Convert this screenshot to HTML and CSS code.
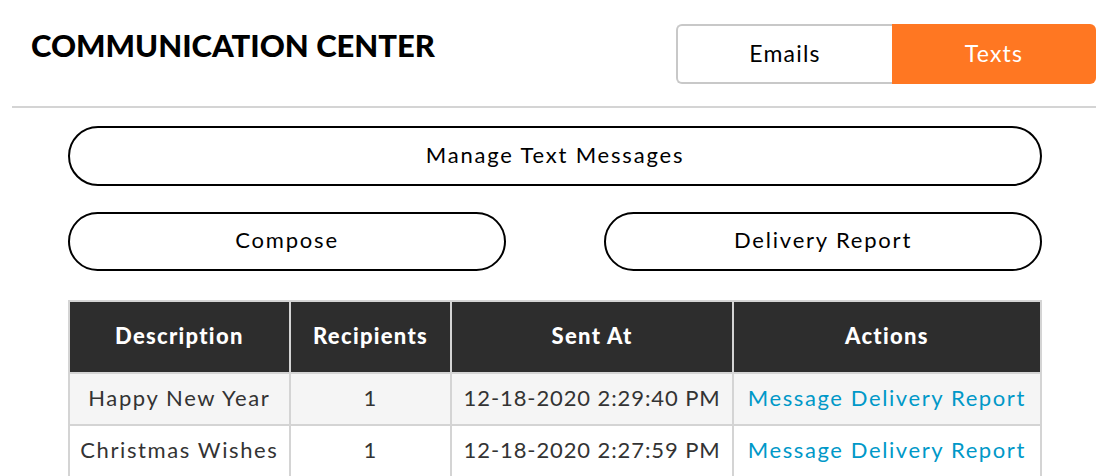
FILE: index.html
```html
<!DOCTYPE html>
<html>
<head>
<meta charset="utf-8">
<link rel="stylesheet" href="styles.css">
</head>
<body>
<div class="page">
  <header class="topbar">
    <h1 class="title">COMMUNICATION CENTER</h1>
    <div class="toggle">
      <button class="tab">Emails</button>
      <button class="tab active">Texts</button>
    </div>
  </header>
  <main class="content">
    <button class="pill full">Manage Text Messages</button>
    <div class="pill-row">
      <button class="pill">Compose</button>
      <button class="pill">Delivery Report</button>
    </div>
    <table class="grid">
      <thead>
        <tr>
          <th class="c1">Description</th>
          <th class="c2">Recipients</th>
          <th class="c3">Sent At</th>
          <th class="c4">Actions</th>
        </tr>
      </thead>
      <tbody>
        <tr class="odd">
          <td>Happy New Year</td>
          <td>1</td>
          <td class="date">12-18-2020 2:29:40 PM</td>
          <td><a href="#">Message Delivery Report</a></td>
        </tr>
        <tr>
          <td>Christmas Wishes</td>
          <td>1</td>
          <td class="date">12-18-2020 2:27:59 PM</td>
          <td><a href="#">Message Delivery Report</a></td>
        </tr>
      </tbody>
    </table>
  </main>
</div>
</body>
</html>
```
FILE: styles.css
```css
* { box-sizing: border-box; }
html, body { margin: 0; padding: 0; background: #fff; }
body {
  font-family: "Lato", "Open Sans", sans-serif;
  color: #000;
  overflow: hidden;
}
.page {
  width: 1084px;
  margin-left: 12px;
}
.topbar {
  display: flex;
  justify-content: space-between;
  align-items: flex-start;
  padding: 24px 0 22px 19px;
  border-bottom: 2px solid #d4d4d4;
}
.title {
  margin: 3px 0 0;
  font-size: 31px;
  font-weight: 900;
  letter-spacing: 0;
  line-height: 36px;
}
.toggle {
  display: flex;
  height: 60px;
}
.tab {
  font-family: inherit;
  font-size: 23px;
  letter-spacing: 1.2px;
  border: none;
  background: #fff;
  color: #000;
  padding: 0 0 3px;
  cursor: pointer;
}
.tab:first-child {
  width: 216px;
  border: 2px solid #c8c8c8;
  border-right: none;
  border-radius: 6px 0 0 6px;
}
.tab.active {
  width: 204px;
  background: #ff7722;
  color: #fff;
  border-radius: 0 6px 6px 0;
}
.content {
  padding: 18px 54px 0 56px;
  display: flex;
  flex-direction: column;
}
.pill {
  font-family: inherit;
  font-size: 22px;
  letter-spacing: 1.8px;
  color: #000;
  background: #fff;
  border: 2px solid #000;
  border-radius: 30px;
  height: 60px;
  padding: 0 0 4px;
  cursor: pointer;
}
.pill-row {
  display: flex;
  justify-content: space-between;
  margin-top: 26px;
}
.pill-row .pill { width: 438px; height: 59px; }
.grid {
  margin-top: 29px;
  width: 974px;
  border-collapse: collapse;
  border: 2px solid #d4d4d4;
  font-size: 22px;
  letter-spacing: 1.6px;
}
.grid th, .grid td {
  border: 2px solid #d4d4d4;
  text-align: center;
  padding: 0 0 3px;
}
.grid th {
  background: #2d2d2d;
  color: #fff;
  font-weight: 900;
  letter-spacing: 1.3px;
  height: 72px;
}
.grid td {
  color: #333;
  height: 52px;
}
.grid td.date { letter-spacing: 0.9px; }
.grid tr.odd td { background: #f5f5f5; }
.c1 { width: 221px; }
.c2 { width: 162px; }
.c3 { width: 282px; }
.c4 { width: 309px; }
.grid a { color: #0098c8; text-decoration: none; }
```
